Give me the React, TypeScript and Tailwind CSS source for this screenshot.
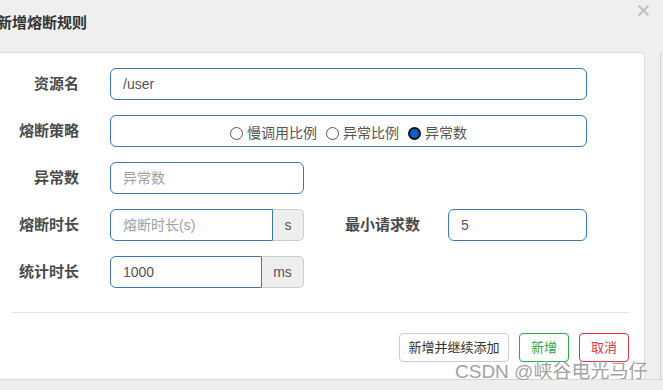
import React from "react";

const font = "font-['Liberation_Sans','Noto_Sans_CJK_SC',sans-serif]";

const Label = ({ text }: { text: string }) => (
  <div className="w-[79px] shrink-0 text-right text-[15px] font-bold text-[#4a4a4a]">{text}</div>
);

const Radio = ({ label, checked }: { label: string; checked?: boolean }) => (
  <label className="flex items-center gap-[4px]">
    {checked ? (
      <span className="w-[13px] h-[13px] rounded-full bg-[#0a5fc9] border-[2px] border-[#111]" />
    ) : (
      <span className="w-[13px] h-[13px] rounded-full bg-white border border-[#555]" />
    )}
    <span>{label}</span>
  </label>
);

export default function App() {
  return (
    <div className={`relative w-[663px] h-[390px] overflow-hidden bg-[#efefef] flex flex-col ${font}`}>
      {/* header */}
      <div className="h-[52px] flex justify-between pr-[13px]">
        <h4 className="ml-[-3px] mt-[12px] text-[15px] font-bold text-[#333]">新增熔断规则</h4>
        <svg width="13" height="13" viewBox="0 0 13 13" className="mt-[4px]">
          <path d="M1.5 1.5 L11.5 11.5 M11.5 1.5 L1.5 11.5" stroke="#c2c2c2" strokeWidth="2.2" />
        </svg>
      </div>

      <div className="flex h-[327px]">
        <div className="w-[645px] bg-white border-t border-r border-[#dcdcdc] rounded-tr-[5px] flex flex-col">
          <form className="flex flex-col gap-[15px] pt-[15px] text-[14px] text-[#555]">
            <div className="flex items-center gap-[31px] h-[32px]">
              <Label text="资源名" />
              <div className="w-[477px] h-full flex items-center pl-[12px] border border-[#3a78b8] rounded-[6px]">/user</div>
            </div>

            <div className="flex items-center gap-[31px] h-[32px]">
              <Label text="熔断策略" />
              <div className="w-[477px] h-full flex items-center justify-center gap-[9px] pt-[4px] border border-[#3a78b8] rounded-[6px]">
                <Radio label="慢调用比例" />
                <Radio label="异常比例" />
                <Radio label="异常数" checked />
              </div>
            </div>

            <div className="flex items-center gap-[31px] h-[32px]">
              <Label text="异常数" />
              <div className="w-[194px] h-full flex items-center pl-[12px] border border-[#3a78b8] rounded-[6px] text-[#a0a0a0]">异常数</div>
            </div>

            <div className="flex items-center gap-[31px] h-[32px]">
              <Label text="熔断时长" />
              <div className="w-[194px] h-full flex">
                <div className="flex-1 flex items-center pl-[12px] border border-[#3a78b8] rounded-l-[6px] text-[#a0a0a0]">熔断时长(s)</div>
                <div className="w-[31px] flex items-center justify-center bg-[#eee] border border-l-0 border-[#ccc] rounded-r-[5px]">s</div>
              </div>
              <div className="w-[86px] text-right text-[15px] font-bold text-[#4a4a4a] ml-[-1px]">最小请求数</div>
              <div className="w-[139px] h-full flex items-center pl-[12px] ml-[-3px] border border-[#3a78b8] rounded-[6px]">5</div>
            </div>

            <div className="flex items-center gap-[31px] h-[32px]">
              <Label text="统计时长" />
              <div className="w-[194px] h-full flex">
                <div className="flex-1 flex items-center pl-[12px] border border-[#3a78b8] rounded-l-[6px]">1000</div>
                <div className="w-[42px] flex items-center justify-center bg-[#eee] border border-l-0 border-[#ccc] rounded-r-[5px]">ms</div>
              </div>
            </div>
          </form>

          <div className="mt-[24px] ml-[12px] mr-[15px] border-t border-[#e5e5e5]" />

          <div className="flex justify-end gap-[10px] mt-[20px] pr-[15px] text-[13px]">
            <button className="w-[110px] h-[29px] border border-[#ccc] rounded-[4px] text-[#333]">新增并继续添加</button>
            <button className="w-[50px] h-[29px] border border-[#2aa845] rounded-[4px] text-[#2aa845]">新增</button>
            <button className="w-[50px] h-[29px] border border-[#dc3545] rounded-[4px] text-[#dc3545]">取消</button>
          </div>
        </div>
        <div className="flex-1 border-r border-[#cfcfcf] mr-[2px]" />
      </div>

      <div className="flex-1 border-t border-[#d6d6d6] bg-[#eee]" />

      {/* watermark */}
      <div className="absolute left-[455px] top-[358px] text-[19px] text-[#a3a3a3] [text-shadow:0_0_2px_#fff]">
        CSDN @峡谷电光马仔
      </div>
    </div>
  );
}
